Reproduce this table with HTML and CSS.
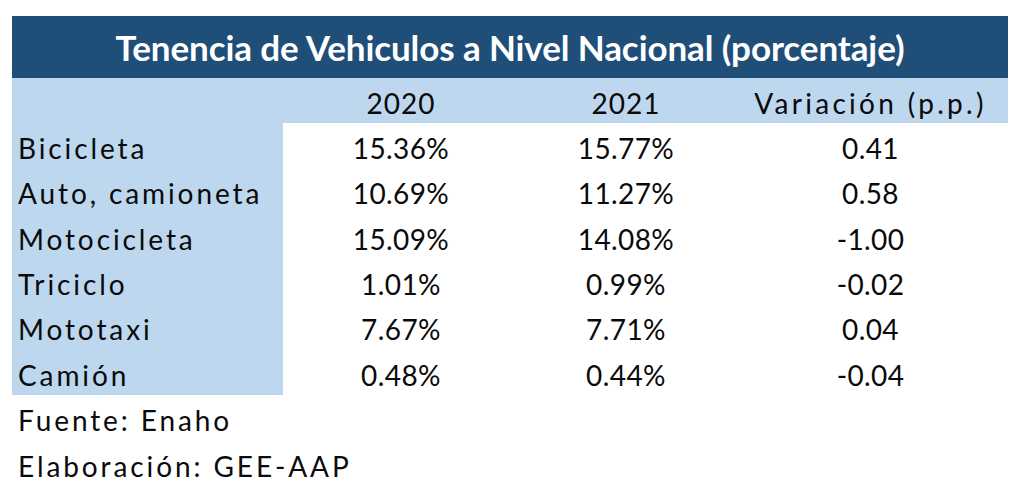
FILE: index.html
```html
<!DOCTYPE html>
<html lang="es">
<head>
<meta charset="utf-8">
<title>Tenencia de Vehiculos a Nivel Nacional</title>
<link rel="stylesheet" href="styles.css">
</head>
<body>
<div class="sheet">
  <div class="title"><span class="title-text">Tenencia de Vehiculos a Nivel Nacional (porcentaje)</span></div>
  <div class="grid">
    <div class="hd label"></div>
    <div class="hd num">2020</div>
    <div class="hd num">2021</div>
    <div class="hd num var">Variación (p.p.)</div>

    <div class="label">Bicicleta</div><div class="num">15.36%</div><div class="num">15.77%</div><div class="num">0.41</div>
    <div class="label">Auto, camioneta</div><div class="num">10.69%</div><div class="num">11.27%</div><div class="num">0.58</div>
    <div class="label">Motocicleta</div><div class="num">15.09%</div><div class="num">14.08%</div><div class="num">-1.00</div>
    <div class="label">Triciclo</div><div class="num">1.01%</div><div class="num">0.99%</div><div class="num">-0.02</div>
    <div class="label">Mototaxi</div><div class="num">7.67%</div><div class="num">7.71%</div><div class="num">0.04</div>
    <div class="label">Camión</div><div class="num">0.48%</div><div class="num">0.44%</div><div class="num">-0.04</div>
  </div>
  <div class="note">Fuente: Enaho</div>
  <div class="note">Elaboración: GEE-AAP</div>
</div>
</body>
</html>
```
FILE: styles.css
```css
html, body {
  margin: 0;
  padding: 0;
  background: #ffffff;
}
body {
  font-family: Lato, "Open Sans", sans-serif;
  color: #0a0a0a;
}
.sheet {
  width: 996px;
  margin: 16px 0 0 12px;
}
.title {
  height: 62px;
  background: #1f4e79;
  display: flex;
  align-items: center;
  justify-content: center;
  overflow: hidden;
}
.title-text {
  color: #ffffff;
  font-weight: 700;
  font-size: 35px;
  letter-spacing: -0.1px;
  white-space: nowrap;
}
.grid {
  display: grid;
  grid-template-columns: 271px 236px 214px 275px;
  grid-template-rows: 45px repeat(6, 45.33px);
}
.grid > div {
  display: flex;
  align-items: center;
  box-sizing: border-box;
  padding-top: 5px;
  font-size: 28px;
  white-space: nowrap;
}
.hd {
  background: #bdd7ee;
}
.grid > .label {
  background: #bdd7ee;
  padding-left: 6px;
  letter-spacing: 2.9px;
}
.num {
  justify-content: center;
  letter-spacing: 0.4px;
}
.hd.num {
  letter-spacing: 1px;
}
.grid > .var {
  letter-spacing: 3.3px;
}
.note {
  height: 45.5px;
  box-sizing: border-box;
  padding-top: 5px;
  display: flex;
  align-items: center;
  padding-left: 6px;
  font-size: 28px;
  letter-spacing: 2.9px;
}
```
